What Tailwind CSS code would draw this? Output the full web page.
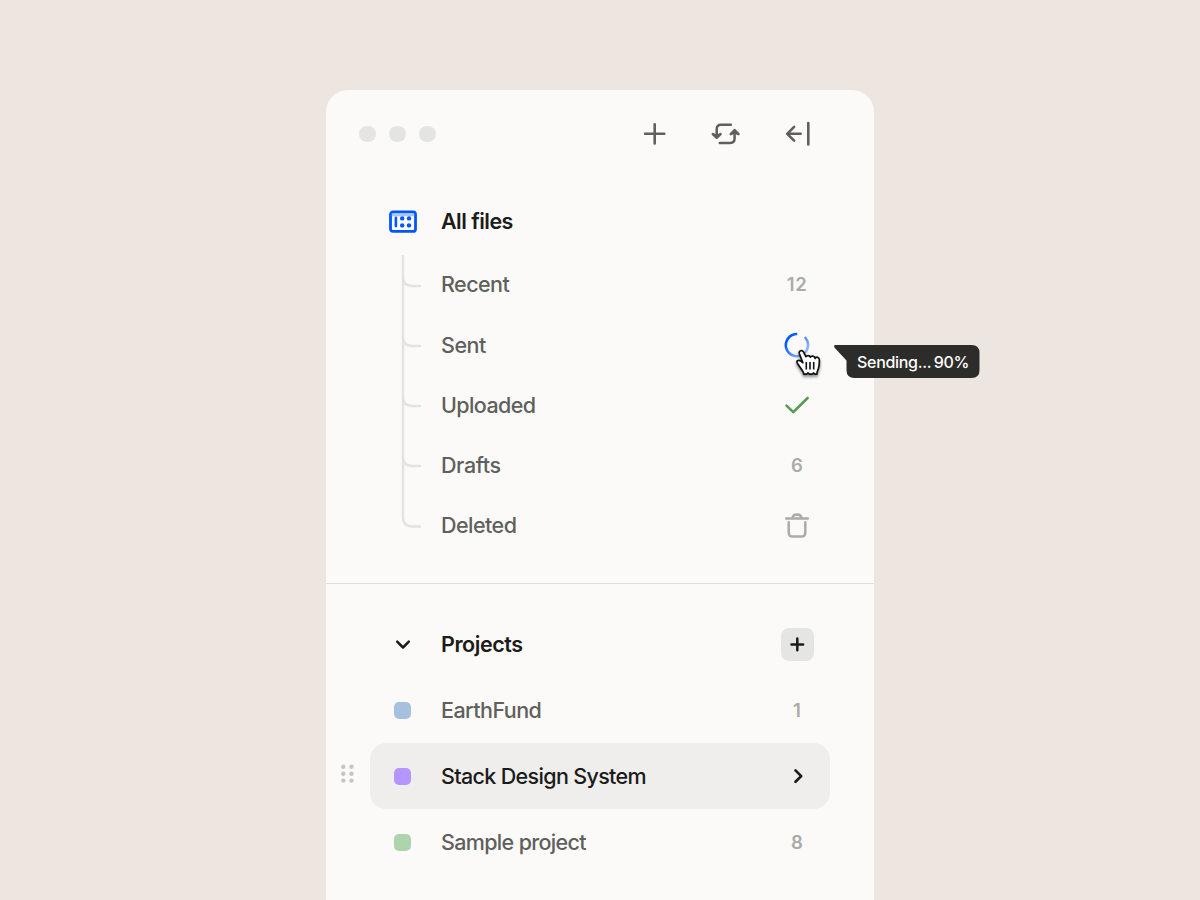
<!DOCTYPE html>
<html lang="en">
<head>
<meta charset="utf-8">
<title>Files</title>
<script src="https://cdn.jsdelivr.net/npm/@tailwindcss/browser@4"></script>
</head>
<body class="h-[900px] overflow-hidden bg-[#ede5df] font-['Inter',sans-serif] text-[21.5px] font-medium text-[#5f5f5d]">
<main class="relative mx-auto mt-[90px] h-[830px] w-[548px] rounded-t-[22px] bg-[#fbfaf8]">
  <header class="flex h-[88px] items-center pl-[33px]">
    <div class="flex gap-[13.5px]">
      <span class="size-[16.6px] rounded-full bg-[#e4e4e2]"></span>
      <span class="size-[16.6px] rounded-full bg-[#e4e4e2]"></span>
      <span class="size-[16.6px] rounded-full bg-[#e4e4e2]"></span>
    </div>
    <svg class="ml-[201.2px]" width="34" height="34" viewBox="0 0 34 34" fill="none" stroke="#5f5f5d" stroke-width="2.6" stroke-linecap="round"><path d="M17.700 7.200v19.200M8.100 16.800h19.200"/></svg>
    <svg class="ml-[37px]" width="34" height="34" viewBox="0 0 34 34" fill="none" stroke="#5f5f5d" stroke-width="2.500" stroke-linecap="round" stroke-linejoin="round"><path d="M22.900 7.800H12.900Q8.700 7.800 8.700 12V20M11.800 26H22.200Q26.600 26 26.600 21.600V13.800"/><path d="M4.800 17.100l3.900 3.700 3.900-3.700-3.900 1.800zM22.700 17.100l3.900-3.900 3.900 3.900-3.900-1.800z" fill="#5f5f5d"/></svg>
    <svg class="ml-[39px]" width="34" height="34" viewBox="0 0 34 34" fill="none" stroke="#5f5f5d" stroke-width="2.600" stroke-linecap="round" stroke-linejoin="round"><path d="M27.300 6.100V27.400M19.700 16.800H6.400M13.100 9.900L6.200 16.800l6.900 6.900"/></svg>
  </header>

  <section class="mx-[44px] mt-[11px]">
    <div class="flex h-[66px] items-center pb-px">
      <span class="flex w-[71px] shrink-0 pl-[18px]">
        <svg width="30" height="24" viewBox="0 0 30 24"><rect x="2.500" y="2" width="25" height="19.400" rx="2.500" fill="#fff" stroke="#0055ff" stroke-width="2.800"/><path d="M3.800 3.300h22.400v3H3.800z" fill="#a9c6ff"/><path d="M7.900 7.700v8.400" stroke="#0055ff" stroke-width="2.600" stroke-linecap="round"/><g fill="#0055ff"><circle cx="14.200" cy="8.400" r="2.200"/><circle cx="21" cy="8.400" r="2.200"/><circle cx="14.200" cy="15.400" r="2.200"/><circle cx="21" cy="15.400" r="2.200"/></g></svg>
      </span>
      <span class="font-semibold tracking-[-0.52px] text-[#1b1b1a]">All files</span>
    </div>
    <div class="flex">
      <svg class="w-[71px] shrink-0" width="71" height="300" viewBox="0 0 71 300" fill="none" stroke="#e3e3e1" stroke-width="2.400" stroke-linecap="round"><path d="M33 0V262Q33 271.500 42.500 271.500H50M33 22Q33 31 42.500 31H50M33 82Q33 91 42.500 91H50M33 142Q33 151 42.500 151H50M33 202Q33 211 42.500 211H50"/></svg>
      <ul class="flex-1">
        <li class="flex h-[60px] items-center justify-between"><span class="pb-px tracking-[-0.55px]">Recent</span><span class="w-[66px] text-center text-[18.5px] font-semibold tracking-[0.5px] text-[#aaaaa9]">12</span></li>
        <li class="flex h-[60px] items-center justify-between"><span class="tracking-[-0.48px]">Sent</span>
          <span class="relative flex w-[66px] justify-center">
            <svg width="28" height="28" viewBox="0 0 28 28" fill="none" stroke-width="2.600" stroke-linecap="round"><defs><linearGradient id="spin" x1="8" y1="5" x2="24" y2="18" gradientUnits="userSpaceOnUse"><stop stop-color="#0055ff"/><stop offset="1" stop-color="#8bb6ff"/></linearGradient></defs><path d="M13.200 3A11.100 11.100 0 1 0 22.500 7" stroke="url(#spin)"/></svg>
            <svg class="absolute left-[30px] top-[15px]" width="34" height="38" viewBox="0 0 34 38"><path style="filter:drop-shadow(0 2px 1.500px #0007)" d="M8.800 16.600C7 15 4.600 14 3.500 14.700C2.300 15.600 3.200 17.200 4 18.300L7.600 23.500C8.400 25 9.800 25.800 9.800 28.200H12.500L14 27L15.500 28.200H18.200L19.700 27L21 28.200H22.800C22.800 25.700 24 24 24.500 22.200C25.200 20 25.400 16.500 25.400 14C25.400 10.800 21.800 10.600 21.200 12.400C20.800 9.600 17 9.500 16.300 11.100C15.600 9.100 12.600 9.300 11.900 10.700L9.600 6.200C8.200 3.400 4.400 4.600 5.400 7.800Z" fill="#fff" stroke="#111" stroke-width="1.700" stroke-linejoin="round"/><path d="M12.300 16v7.500M16 16v7.500M19.700 16v7.500" stroke="#111" stroke-width="1.600"/></svg>
          </span></li>
        <li class="flex h-[60px] items-center justify-between"><span class="tracking-[-0.6px]">Uploaded</span><span class="flex w-[66px] justify-center"><svg width="28" height="24" viewBox="0 0 28 24" fill="none" stroke="#559a55" stroke-width="2.600" stroke-linecap="round" stroke-linejoin="round"><path d="M3.500 12.600l6.800 6.500L24.600 5"/></svg></span></li>
        <li class="flex h-[60px] items-center justify-between"><span class="tracking-[-0.4px]">Drafts</span><span class="w-[66px] pt-px text-center text-[18.5px] font-semibold text-[#aaaaa9]">6</span></li>
        <li class="flex h-[60px] items-center justify-between"><span class="tracking-[-0.55px]">Deleted</span><span class="flex w-[66px] justify-center"><svg width="28" height="30" viewBox="0 0 28 30" fill="none" stroke="#aaaaa9" stroke-width="2.500" stroke-linecap="round"><path d="M3.200 8.600H24.800M9.400 8.300C10 3.100 18 3.100 18.600 8.300M5.700 12.300V22.500Q5.700 26.600 9.800 26.600H18.200Q22.300 26.600 22.300 22.500V12.300"/></svg></span></li>
      </ul>
    </div>
  </section>

  <hr class="mt-[28px] border-t border-[#dededc]">

  <section class="mx-[44px] mt-[27px]">
    <div class="flex h-[66px] items-center">
      <span class="flex w-[71px] pl-[23px]"><svg width="20" height="20" viewBox="0 0 20 20" fill="none" stroke="#1b1b1a" stroke-width="2.500" stroke-linecap="round" stroke-linejoin="round"><path d="M4.200 7.700l5.800 5.800 5.800-5.800"/></svg></span>
      <span class="flex-1 font-semibold tracking-[-0.42px] text-[#1b1b1a]">Projects</span>
      <span class="flex w-[66px] justify-center"><span class="flex size-[33px] items-center justify-center rounded-[8px] bg-[#e5e5e3]"><svg width="17" height="17" viewBox="0 0 17 17" stroke="#1b1b1a" stroke-width="2.500" stroke-linecap="round"><path d="M8.300 2.600v11.600M2.500 8.400h11.600"/></svg></span></span>
    </div>
    <div class="flex h-[66px] items-center">
      <span class="flex w-[71px] pl-[24.4px]"><span class="size-[17px] rounded-[5px] bg-[#a5c1de]"></span></span>
      <span class="flex-1 tracking-[-0.55px]">EarthFund</span>
      <span class="w-[66px] pt-px text-center text-[18.5px] font-semibold text-[#aaaaa9]">1</span>
    </div>
    <div class="relative flex h-[66px] items-center rounded-[16px] bg-[#efeeec]">
      <svg class="absolute left-[-30px] top-[20px]" width="16" height="22" viewBox="0 0 16 22" fill="#c5c5c3"><circle cx="3.300" cy="3.800" r="2.200"/><circle cx="11.500" cy="3.800" r="2.200"/><circle cx="3.300" cy="10.700" r="2.200"/><circle cx="11.500" cy="10.700" r="2.200"/><circle cx="3.300" cy="17.600" r="2.200"/><circle cx="11.500" cy="17.600" r="2.200"/></svg>
      <span class="flex w-[71px] pl-[24.4px]"><span class="size-[17px] rounded-[5px] bg-[#b595ff]"></span></span>
      <span class="flex-1 tracking-[-0.66px] text-[#1b1b1a]">Stack Design System</span>
      <span class="flex w-[66px] justify-center"><svg width="20" height="20" viewBox="0 0 20 20" fill="none" stroke="#1b1b1a" stroke-width="2.700" stroke-linecap="round" stroke-linejoin="round"><path d="M8.500 4.400l5.700 5.700-5.700 5.700"/></svg></span>
    </div>
    <div class="flex h-[66px] items-center">
      <span class="flex w-[71px] pl-[24.4px]"><span class="size-[17px] rounded-[5px] bg-[#afd3ad]"></span></span>
      <span class="flex-1 tracking-[-0.66px]">Sample project</span>
      <span class="w-[66px] pt-px text-center text-[18.5px] font-semibold text-[#aaaaa9]">8</span>
    </div>
  </section>

  <div class="absolute left-[508px] top-[255px] h-[33px] w-[146px]">
    <svg class="absolute inset-0" width="146" height="33" viewBox="0 0 146 33"><path d="M1.500 0H137.500Q145.500 0 145.500 8V25Q145.500 33 137.500 33H20.500Q12.500 33 12.500 25V15.500L.6 2.800Q-.8 0 1.500 0Z" fill="#2c2c2a"/></svg>
    <span class="relative block whitespace-nowrap pl-[23px] pt-px text-[16px] leading-[33px] tracking-[-0.3px] text-white [word-spacing:-1.5px]">Sending... 90%</span>
  </div>
</main>
</body>
</html>
